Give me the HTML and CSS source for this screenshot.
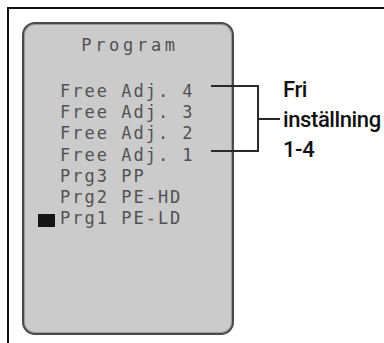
FILE: index.html
```html
<html>

<head>
    <link rel="stylesheet" href="styles.css">
</head>

<body>
    <div class="frame">
        <div class="screen">
            <div class="title">Program</div>
            <div class="list">
                <div class="row"><span class="mark"></span>Free Adj. 4</div>
                <div class="row"><span class="mark"></span>Free Adj. 3</div>
                <div class="row"><span class="mark"></span>Free Adj. 2</div>
                <div class="row"><span class="mark"></span>Free Adj. 1</div>
                <div class="row"><span class="mark"></span>Prg3 PP</div>
                <div class="row"><span class="mark"></span>Prg2 PE-HD</div>
                <div class="row active"><span class="mark"></span>Prg1 PE-LD</div>
            </div>
        </div>
        <div class="callout">
            <div class="bracket"></div>
            <div class="tick"></div>
            <div class="label">Fri<br>inställning<br>1-4</div>
        </div>
    </div>
</body>

</html>
```

FILE: styles.css
```css
body {
    margin: 0;
    overflow: hidden;
    background: #ffffff;
}

.frame {
    display: flex;
    align-items: flex-start;
    margin: 7px 0 0 7px;
    height: 336px;
    box-sizing: border-box;
    border-top: 2px solid #111111;
    border-left: 2px solid #111111;
}

.screen {
    flex-shrink: 0;
    width: 212px;
    height: 313px;
    box-sizing: border-box;
    margin: 13px 0 0 13px;
    padding-top: 11px;
    background-color: #cbcbcb;
    border: 2px solid #4a4a4a;
    border-radius: 13px;
    box-shadow: inset 0 0 0 1px #9a9a9a;
    font-family: "DejaVu Sans Mono", monospace;
    font-size: 17px;
    line-height: 21.25px;
    color: #525252;
}

.title {
    text-align: center;
    letter-spacing: 3.7px;
    padding-left: 4px;
}

.list {
    margin-top: 24.5px;
    padding-left: 14px;
}

.row {
    display: flex;
    align-items: center;
    letter-spacing: 2px;
    white-space: pre;
}

.mark {
    flex-shrink: 0;
    width: 17px;
    height: 13px;
    margin-right: 5px;
    margin-top: 3px;
}

.active .mark {
    background-color: #151515;
}

.callout {
    flex-shrink: 0;
    display: flex;
    align-items: flex-start;
    margin: 66px 0 0 -23px;
    position: relative;
}

.bracket {
    width: 46px;
    height: 63px;
    margin-top: 10px;
    border: 2px solid #2a2a2a;
    border-left: none;
}

.tick {
    width: 21px;
    height: 2px;
    margin-top: 43px;
    background-color: #2a2a2a;
}

.label {
    margin-left: 3px;
    font-family: Roboto, "Liberation Sans", sans-serif;
    font-weight: 500;
    font-size: 22px;
    letter-spacing: -0.4px;
    line-height: 30px;
    color: #111111;
}
```
